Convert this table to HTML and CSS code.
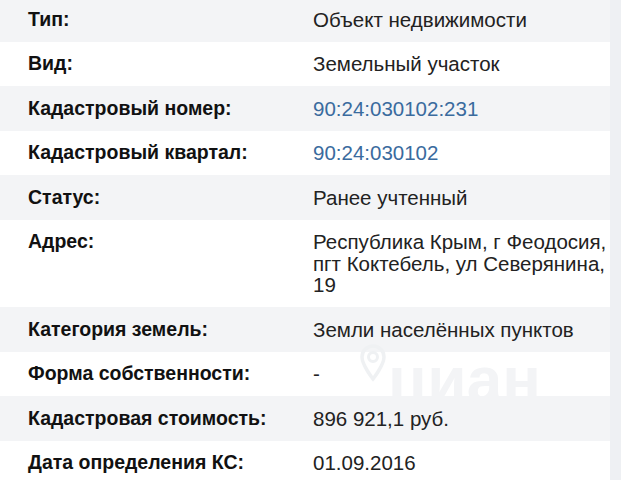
FILE: index.html
```html
<!DOCTYPE html>
<html lang="ru">
<head>
<meta charset="utf-8">
<link rel="stylesheet" href="styles.css">
</head>
<body>
<div class="page">
  <div class="table">
    <div class="row"><div class="label">Тип:</div><div class="value">Объект недвижимости</div></div>
    <div class="row"><div class="label">Вид:</div><div class="value">Земельный участок</div></div>
    <div class="row"><div class="label">Кадастровый номер:</div><div class="value"><a class="link">90:24:030102:231</a></div></div>
    <div class="row"><div class="label">Кадастровый квартал:</div><div class="value"><a class="link">90:24:030102</a></div></div>
    <div class="row"><div class="label">Статус:</div><div class="value">Ранее учтенный</div></div>
    <div class="row"><div class="label">Адрес:</div><div class="value">Республика Крым, г Феодосия, пгт Коктебель, ул Северянина, 19</div></div>
    <div class="row"><div class="label">Категория земель:</div><div class="value">Земли населённых пунктов</div></div>
    <div class="row"><div class="label">Форма собственности:</div><div class="value">-</div></div>
    <div class="row"><div class="label">Кадастровая стоимость:</div><div class="value">896 921,1 руб.</div></div>
    <div class="row"><div class="label">Дата определения КС:</div><div class="value">01.09.2016</div></div>
    <div class="watermark" aria-hidden="true">
      <svg class="pin" width="30" height="40" viewBox="0 0 30 40"><path d="M15 3C8.5 3 4 8 4 14c0 8 11 22 11 22s11-14 11-22C26 8 21.5 3 15 3z" fill="none" stroke="#eff1f3" stroke-width="3.5"/><circle cx="15" cy="14" r="4.5" fill="none" stroke="#eff1f3" stroke-width="3"/></svg>
      <span class="wm-text">циан</span>
    </div>
  </div>
  <div class="side"></div>
</div>
</body>
</html>
```

FILE: styles.css
```css
html, body {
  margin: 0;
  padding: 0;
  background: #ffffff;
}
body {
  font-family: "Liberation Sans", Arial, sans-serif;
  color: #1c1c1c;
  overflow: hidden;
}
.page {
  display: flex;
  width: 621px;
  height: 480px;
  overflow: hidden;
}
.table {
  position: relative;
  flex: 0 0 610px;
  margin-top: -3px;
}
.side {
  flex: 1;
  background: #eef0f3;
}
.row {
  display: grid;
  grid-template-columns: 285px 1fr;
  padding: 11.5px 2px 11.5px 28px;
  line-height: 21.5px;
}
.row:nth-child(odd) {
  background: #f3f4f6;
}
.row:nth-child(even) {
  background: #ffffff;
}
.label {
  font-weight: bold;
  font-size: 19.5px;
  color: #111111;
}
.value {
  font-size: 20.5px;
  color: #222222;
  position: relative;
  z-index: 1;
}
.link {
  color: #3a6b9e;
  text-decoration: none;
}
.watermark {
  position: absolute;
  left: 358px;
  top: 344px;
  display: flex;
  align-items: flex-start;
  gap: 0;
}
.pin {
  margin-top: 2px;
}
.wm-text {
  margin-top: 21px;
  font-family: "Liberation Sans", Arial, sans-serif;
  font-weight: bold;
  font-size: 64px;
  line-height: 36px;
  color: #f3f4f6;
}
```
